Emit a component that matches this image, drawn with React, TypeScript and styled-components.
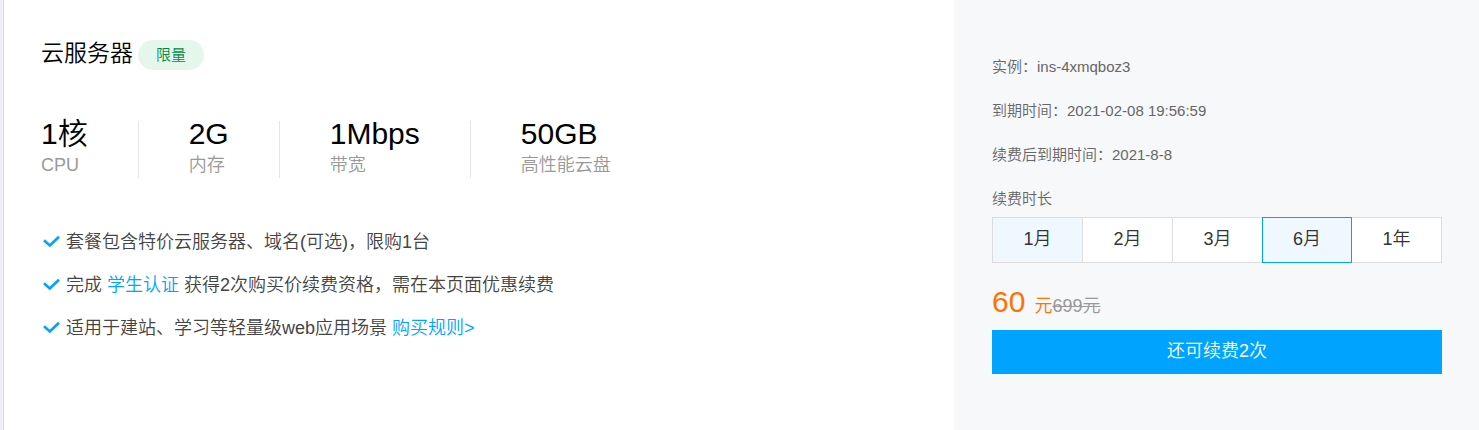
import React, { useState } from "react";
import styled, { createGlobalStyle } from "styled-components";

const GlobalStyle = createGlobalStyle`
  *, *::before, *::after { box-sizing: border-box; }
  html, body { margin: 0; padding: 0; }
  body {
    background: #ffffff;
    color: #000000;
    font-family: "Liberation Sans", "Noto Sans CJK SC", sans-serif;
    font-weight: 350;
  }
  button { font: inherit; cursor: pointer; }
  p, h2, ul, dl, dd { margin: 0; padding: 0; }
`;

const Card = styled.main`
  display: flex;
  min-height: 100vh;
  border-left: 3px solid #eeeff4;
`;

const Product = styled.section`
  flex: 1;
  min-width: 0;
  padding: 37px;
  border-left: 1px solid #dcdcdc;
`;

const Heading = styled.header`
  display: flex;
  align-items: flex-end;
  gap: 5px;
  height: 33px;
`;

const Title = styled.h2`
  font-size: 23px;
  line-height: 33px;
  font-weight: 350;
`;

const Badge = styled.span`
  padding: 0 18px;
  border-radius: 15px;
  background: #e5f7ed;
  color: #008a45;
  font-size: 15px;
  line-height: 30px;
`;

const Specs = styled.dl`
  display: flex;
  margin-top: 51px;
`;

const Spec = styled.div`
  display: flex;
  flex-direction: column;
  height: 57px;
  padding-right: 50px;

  & + & {
    padding-left: 50px;
    border-left: 1px solid #e5e5e5;
  }
`;

const SpecValue = styled.dd`
  order: 1;
  font-size: 30px;
  line-height: 26px;
  white-space: nowrap;
`;

const SpecName = styled.dt`
  order: 2;
  margin-top: 5px;
  color: #999999;
  font-size: 18px;
  line-height: 26px;
  white-space: nowrap;
`;

const Features = styled.ul`
  display: flex;
  flex-direction: column;
  gap: 19px;
  margin-top: 52px;
  list-style: none;
`;

const Feature = styled.li`
  display: flex;
  align-items: center;
  gap: 6px;
  padding-left: 2px;
  color: #444444;
  font-size: 18px;
  line-height: 24px;
`;

const TextLink = styled.a`
  color: #00a4ff;
  text-decoration: none;
`;

const Renewal = styled.aside`
  flex: 0 0 525px;
  padding: 55px 37px 38px 38px;
  background: #f7f8fa;
`;

const Meta = styled.p`
  margin-bottom: 20px;
  color: #666666;
  font-size: 15px;
  line-height: 24px;
`;

const DurationLabel = styled(Meta)`
  margin-bottom: 6px;
`;

const Durations = styled.div`
  display: grid;
  grid-template-columns: repeat(5, 1fr);
`;

const Duration = styled.button<{ $selected: boolean; $tinted: boolean }>`
  height: 46px;
  padding: 0 0 2px;
  border: 1px solid ${(p) => (p.$selected ? "#00a4ff" : "#dddddd")};
  border-right-width: ${(p) => (p.$selected ? "1px" : "0")};
  background: ${(p) => (p.$selected || p.$tinted ? "#f0f8ff" : "#ffffff")};
  color: #333333;
  font-size: 18px;
  line-height: 24px;

  &:last-child {
    border-right-width: 1px;
  }

  &[aria-pressed="true"] + & {
    border-left-width: 0;
  }
`;

const Price = styled.p`
  display: flex;
  align-items: baseline;
  margin-top: 19px;
  color: #ff7200;
  font-size: 18px;
  line-height: 40px;
`;

const Amount = styled.span`
  margin-right: 9px;
  font-size: 30px;
`;

const OldPrice = styled.del`
  color: #999999;
`;

const RenewButton = styled.button`
  display: block;
  width: 100%;
  height: 44px;
  margin-top: 4px;
  padding: 0 0 2px;
  border: 0;
  background: #00a4ff;
  color: #ffffff;
  font-size: 18px;
  line-height: 24px;
`;

const Check = () => (
  <svg width="17" height="14" viewBox="0 0 17 14" aria-hidden="true">
    <path d="M1 5.2 L6.8 10.4 L16 1.8" fill="none" stroke="#00a4ff" strokeWidth="2.7" />
  </svg>
);

const specs = [
  { value: "1核", name: "CPU" },
  { value: "2G", name: "内存" },
  { value: "1Mbps", name: "带宽" },
  { value: "50GB", name: "高性能云盘" },
];

const durations = ["1月", "2月", "3月", "6月", "1年"];

export default function App() {
  const [selected, setSelected] = useState("6月");

  return (
    <>
      <GlobalStyle />
      <Card lang="zh-CN">
        <Product>
          <Heading>
            <Title>云服务器</Title>
            <Badge>限量</Badge>
          </Heading>
          <Specs>
            {specs.map((s) => (
              <Spec key={s.name}>
                <SpecName>{s.name}</SpecName>
                <SpecValue>{s.value}</SpecValue>
              </Spec>
            ))}
          </Specs>
          <Features>
            <Feature>
              <Check />
              <span>套餐包含特价云服务器、域名(可选)，限购1台</span>
            </Feature>
            <Feature>
              <Check />
              <span>
                完成 <TextLink href="#verify">学生认证</TextLink> 获得2次购买价续费资格，需在本页面优惠续费
              </span>
            </Feature>
            <Feature>
              <Check />
              <span>
                适用于建站、学习等轻量级web应用场景 <TextLink href="#rules">购买规则&gt;</TextLink>
              </span>
            </Feature>
          </Features>
        </Product>
        <Renewal>
          <Meta>实例：ins-4xmqboz3</Meta>
          <Meta>到期时间：2021-02-08 19:56:59</Meta>
          <Meta>续费后到期时间：2021-8-8</Meta>
          <DurationLabel id="duration-label">续费时长</DurationLabel>
          <Durations role="group" aria-labelledby="duration-label">
            {durations.map((d, i) => (
              <Duration
                key={d}
                type="button"
                aria-pressed={d === selected}
                $selected={d === selected}
                $tinted={i === 0}
                onClick={() => setSelected(d)}
              >
                {d}
              </Duration>
            ))}
          </Durations>
          <Price>
            <Amount>60</Amount>元<OldPrice>699元</OldPrice>
          </Price>
          <RenewButton type="button">还可续费2次</RenewButton>
        </Renewal>
      </Card>
    </>
  );
}
